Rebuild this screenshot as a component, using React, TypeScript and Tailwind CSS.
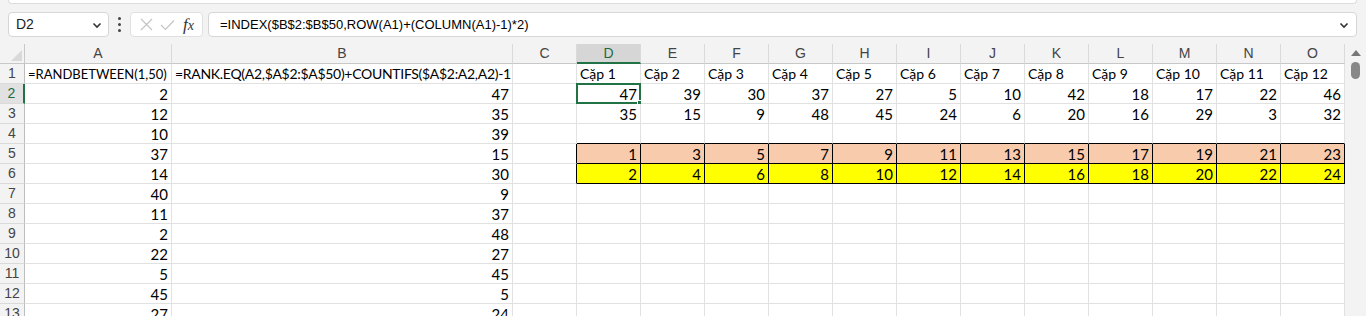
import React from 'react'

const cols = ['A', 'B', 'C', 'D', 'E', 'F', 'G', 'H', 'I', 'J', 'K', 'L', 'M', 'N', 'O']
const aVals = [2, 12, 10, 37, 14, 40, 11, 2, 22, 5, 45, 27]
const bVals = [47, 35, 39, 15, 30, 9, 37, 48, 27, 45, 5, 24]
const pairTop = [47, 39, 30, 37, 27, 5, 10, 42, 18, 17, 22, 46]
const pairBottom = [35, 15, 9, 48, 45, 24, 6, 20, 16, 29, 3, 32]
const rows = [1, 2, 3, 4, 5, 6, 7, 8, 9, 10, 11, 12, 13]

function cellValue(r: number, c: number): string {
  if (r === 1) {
    if (c === 0) return '=RANDBETWEEN(1,50)'
    if (c === 1) return '=RANK.EQ(A2,$A$2:$A$50)+COUNTIFS($A$2:A2,A2)-1'
    if (c >= 3) return 'Cặp ' + (c - 2)
    return ''
  }
  if (c === 0) return String(aVals[r - 2])
  if (c === 1) return String(bVals[r - 2])
  if (c >= 3) {
    const i = c - 3
    if (r === 2) return String(pairTop[i])
    if (r === 3) return String(pairBottom[i])
    if (r === 5) return String(i * 2 + 1)
    if (r === 6) return String(i * 2 + 2)
  }
  return ''
}

function textClass(r: number, c: number): string {
  if (r !== 1) return 'pr-[3px] text-right text-[15px]'
  if (c === 0) return 'pl-[3px] text-left text-[13px]'
  if (c === 1) return 'pl-[3px] text-left text-[14px] tracking-[-0.3px]'
  return 'pl-[3px] text-left text-[14px]'
}

function Cell({ r, c }: { r: number; c: number }) {
  const v = cellValue(r, c)
  const inBlock = c >= 3 && (r === 5 || r === 6)
  const rightBlack = inBlock || (c === 2 && (r === 5 || r === 6))
  const bottomBlack = inBlock || (c >= 3 && r === 4)
  const bg = c >= 3 && r === 5 ? 'bg-[#f8cbad]' : c >= 3 && r === 6 ? 'bg-[#ffff00]' : 'bg-white'
  return (
    <div
      className={
        'relative h-5 border-r border-b whitespace-nowrap font-[Lato,sans-serif] leading-[20px] text-black ' +
        bg + ' ' +
        (rightBlack ? 'border-r-black ' : 'border-r-[#e1e1e1] ') +
        (bottomBlack ? 'border-b-black ' : 'border-b-[#e1e1e1] ') +
        textClass(r, c)
      }
    >
      {v}
      {r === 2 && c === 3 && (
        <div className="absolute -left-px -top-px -right-px -bottom-px border-2 border-[#217346]">
          <div className="absolute -right-[4px] -bottom-[4px] w-[6px] h-[6px] bg-[#217346] border border-white" />
        </div>
      )}
    </div>
  )
}

export default function App() {
  return (
    <div className="w-[1366px] h-[316px] overflow-hidden bg-[#f3f3f3] font-['Liberation_Sans',sans-serif]">
      <div className="h-[4px] ml-[8px] mr-[9px] bg-white border-x border-b border-[#dcdcdc] rounded-b-[6px]" />

      {/* formula bar */}
      <div className="flex items-center mt-[8px] h-[25px] pl-[8px] pr-[9px]">
        <div className="w-[101px] h-[25px] flex items-center justify-between bg-white border border-[#d6d6d6] rounded-[4px] pl-[7px] pr-[6px] text-[14px] text-[#222]">
          <span>D2</span>
          <svg width="10" height="10" viewBox="0 0 10 10" fill="none" stroke="#333" strokeWidth="1.6">
            <path d="M1.5 3.5 L5 7 L8.5 3.5" />
          </svg>
        </div>
        <div className="w-[21px] flex flex-col items-center gap-[3px]">
          <div className="w-[3px] h-[3px] rounded-full bg-[#444]" />
          <div className="w-[3px] h-[3px] rounded-full bg-[#444]" />
          <div className="w-[3px] h-[3px] rounded-full bg-[#444]" />
        </div>
        <div className="w-[73px] h-[25px] flex items-center bg-white border border-[#e0e0e0] rounded-[4px] pl-[9px] gap-[7px]">
          <svg width="13" height="13" viewBox="0 0 13 13" stroke="#c4c4c4" strokeWidth="1.2">
            <path d="M1 1 L12 12 M12 1 L1 12" />
          </svg>
          <svg width="15" height="12" viewBox="0 0 15 12" fill="none" stroke="#c4c4c4" strokeWidth="1.2">
            <path d="M1 6 L5.5 10.5 L14 1.5" />
          </svg>
          <span className="font-['Liberation_Serif',serif] italic text-[17px] leading-none text-[#333] ml-[1px]">
            f<span className="text-[14px]">x</span>
          </span>
        </div>
        <div className="flex-1 ml-[5px] h-[25px] flex items-center justify-between bg-white border border-[#d6d6d6] rounded-[4px] pl-[11px] pr-[7px] text-[13px] text-black">
          <span>=INDEX($B$2:$B$50,ROW(A1)+(COLUMN(A1)-1)*2)</span>
          <svg width="10" height="10" viewBox="0 0 10 10" fill="none" stroke="#333" strokeWidth="1.6">
            <path d="M1.5 3.5 L5 7 L8.5 3.5" />
          </svg>
        </div>
      </div>

      {/* sheet */}
      <div className="flex mt-[7px]">
        <div className="grid grid-cols-[25px_147px_341px_64px_repeat(12,64px)] w-[1345px]">
          <div className="h-5 bg-[#f3f3f3] border-r border-b border-[#c8c8c8] flex items-end justify-end pr-[2px] pb-[2px]">
            <svg width="11" height="11" viewBox="0 0 11 11">
              <polygon points="11,0 11,11 0,11" fill="#d9d9d9" />
            </svg>
          </div>
          {cols.map((c) => (
            <div
              key={c}
              className={
                'h-5 flex items-center justify-center text-[14px] border-r border-r-[#dadada] ' +
                (c === 'D'
                  ? 'bg-[#d6d6d6] text-[#1e6b41] border-b-2 border-b-[#217346]'
                  : 'bg-[#f3f3f3] text-[#444] border-b border-b-[#c8c8c8]')
              }
            >
              {c}
            </div>
          ))}
          {rows.map((r) => (
            <React.Fragment key={r}>
              <div
                className={
                  'h-5 flex items-center justify-center text-[14px] border-b border-b-[#dadada] ' +
                  (r === 2
                    ? 'bg-[#e1e1e1] text-[#1e6b41] border-r-2 border-r-[#217346]'
                    : 'bg-[#f3f3f3] text-[#444] border-r border-r-[#bdbdbd]')
                }
              >
                {r}
              </div>
              {cols.map((_, ci) => (
                <Cell key={ci} r={r} c={ci} />
              ))}
            </React.Fragment>
          ))}
        </div>

        {/* vertical scrollbar */}
        <div className="w-[21px] flex flex-col items-center pt-[6px] bg-[#f3f3f3]">
          <svg width="10" height="6" viewBox="0 0 10 6">
            <polygon points="5,0 10,6 0,6" fill="#777" />
          </svg>
          <div className="mt-[6px] w-[9px] h-[17px] rounded-full bg-[#888]" />
        </div>
      </div>
    </div>
  )
}
